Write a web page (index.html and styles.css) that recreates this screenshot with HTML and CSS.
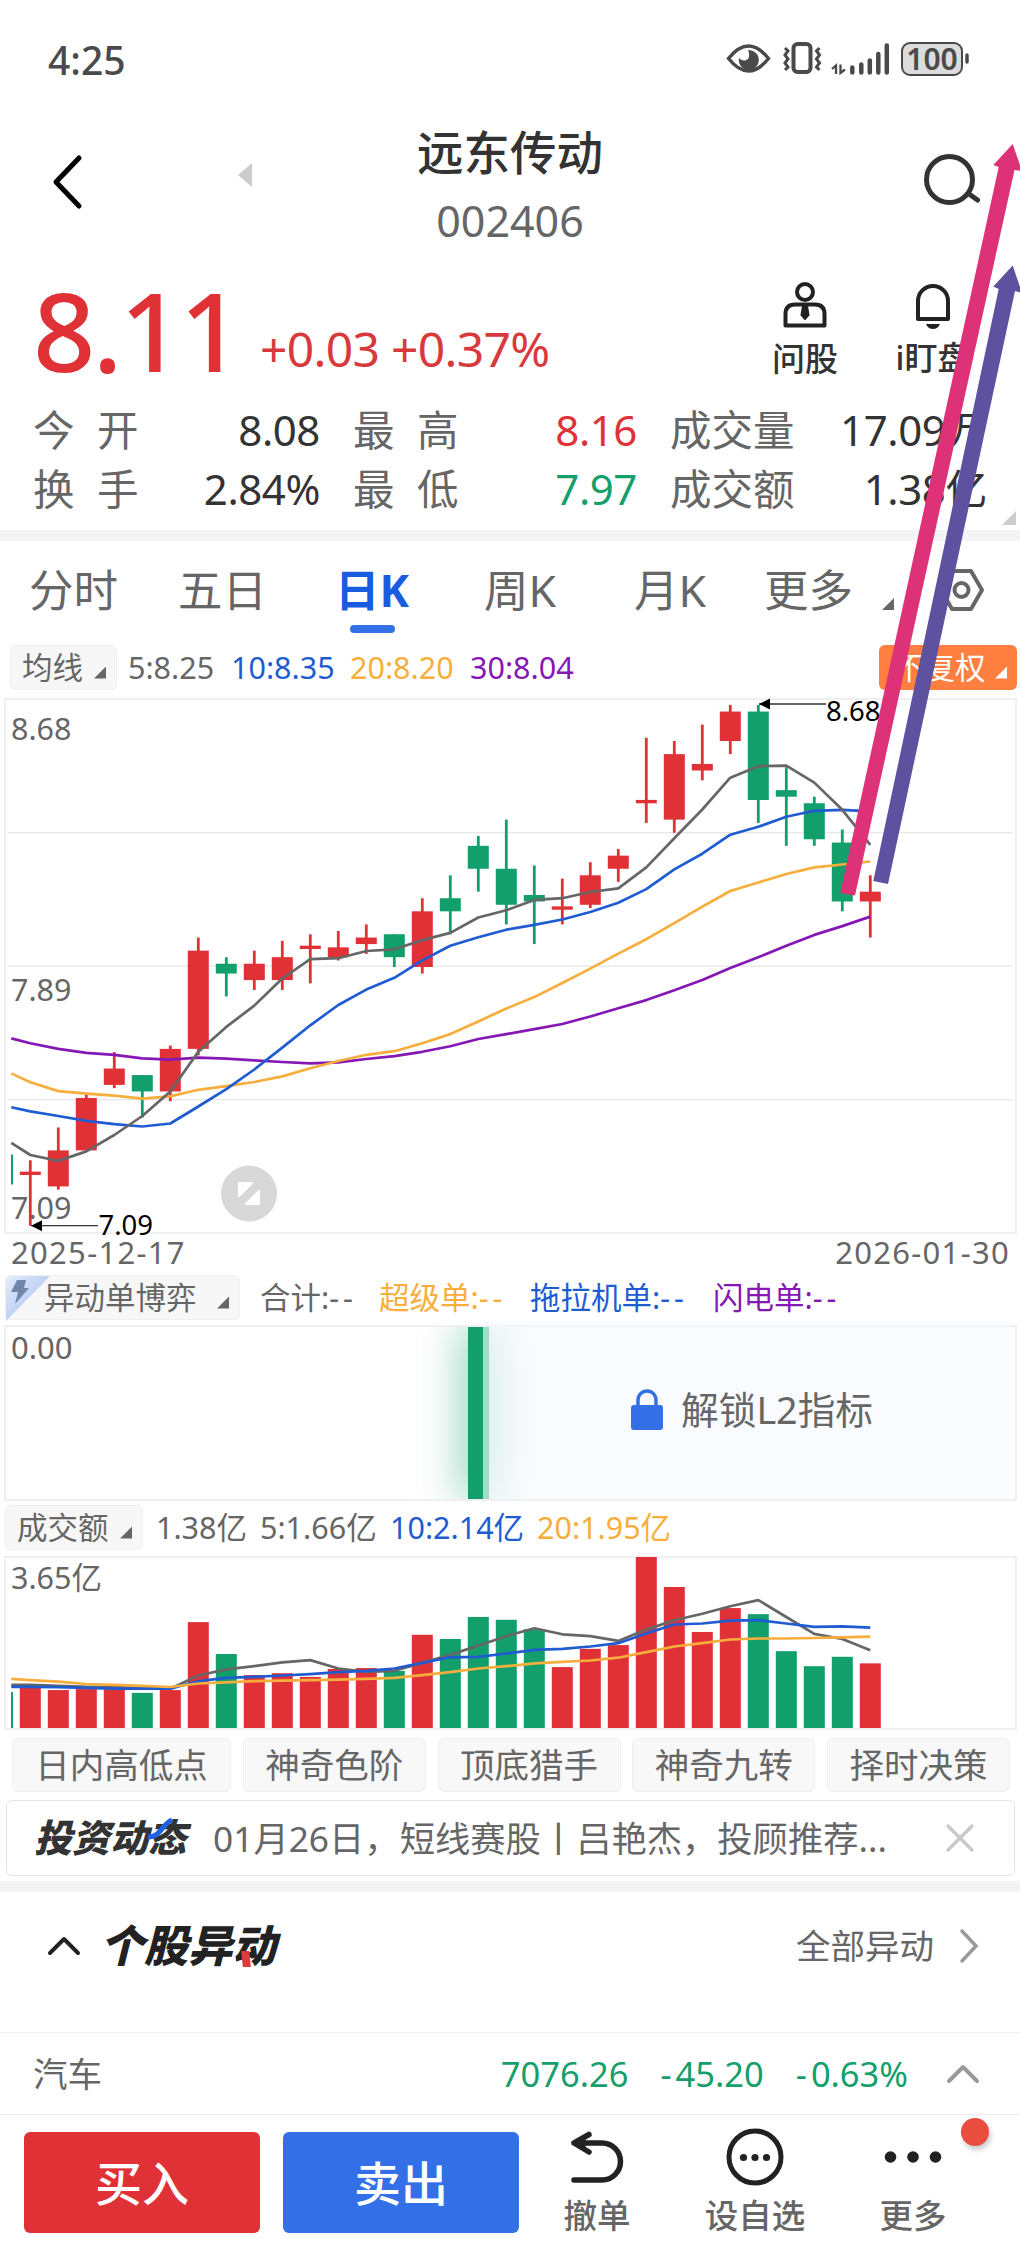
FILE: index.html
```html
<!DOCTYPE html>
<html lang="zh-CN">
  <head>
    <meta charset="UTF-8" />
    <meta name="viewport" content="width=device-width, initial-scale=1.0" />
    <title>远东传动 002406</title>
    <link rel="stylesheet" href="styles.css">
  </head>
  <body>
    <div class="status-bar">
      <span class="clock">4:25</span>
      <svg class="status-icons" width="250" height="44" viewBox="0 0 250 44">
        <g fill="none" stroke="#4a4a4a">
          <path d="M4 21C12 11 18 8.500 24 8.500S36 11 44 21C36 31 30 33.500 24 33.500S12 31 4 21Z" transform="translate(-.5 .5)" stroke-width="3.500" />
          <rect x="68.500" y="7" width="17" height="28" rx="4" stroke-width="4" />
          <path d="M60 11l3 3-3 4 3 4-3 4 3 4-3 3M94.500 11l-3 3 3 4-3 4 3 4-3 4 3 3" stroke-width="3" />
          <path d="M127 36V31M136 36V28M144.500 36V24M153 36V17.500M161.500 36V9" transform="translate(.3 -.5)" stroke-width="4.500" stroke-linecap="round" />
          <path d="M107 32l4-3.500V37M115.500 27.500V36l4.500-3.500" stroke-width="2.300" />
          <rect x="177" y="6" width="60" height="32" rx="8" fill="#dcdcdc" stroke-width="2" />
          <path d="M242 18v7" stroke-width="3.500" stroke-linecap="round" />
        </g>
        <path d="M23 13a10 10 0 1 1-9 8c3 4 10 3 10-2 0-3 0-4-1-6z" fill="#4a4a4a" />
        <text class="battery" x="207" y="32.500" text-anchor="middle">100</text>
      </svg>
    </div>

    <header class="header">
      <div class="header-left">
        <svg width="36" height="60" viewBox="0 0 36 60"><path d="M30 6L7 30l23 24" fill="none" stroke="#000" stroke-width="5" stroke-linecap="round" stroke-linejoin="round" /></svg>
        <svg width="14" height="24" viewBox="0 0 14 24"><path d="M14 0v24L0 12z" fill="#ccc" /></svg>
      </div>
      <div class="title">
        <h1>远东传动</h1>
        <p>002406</p>
      </div>
      <svg class="search" width="62" height="60" viewBox="0 0 62 60">
        <circle cx="29.500" cy="29.500" r="23" fill="none" stroke="#333" stroke-width="5" />
        <path d="M49 44l8.500 6" stroke="#333" stroke-width="5" stroke-linecap="round" />
      </svg>
    </header>

    <section class="quote">
      <span class="price">8.11</span>
      <span class="change">+0.03 +0.37%</span>
      <div class="quote-action">
        <svg width="46" height="48" viewBox="0 0 46 48" fill="none" stroke="#222" stroke-width="4">
          <circle cx="23" cy="11" r="8" />
          <path d="M3.500 44.500V33q0-9.500 9.500-9.500h20q9.500 0 9.500 9.500v11.500z" stroke-linejoin="round" />
          <path d="M21 25h4l1.500 9-3.500 4-3.500-4z" fill="#222" stroke-width="2" />
        </svg>
        <span>问股</span>
      </div>
      <div class="quote-action bell">
        <svg width="46" height="48" viewBox="0 0 46 48">
          <path d="M8 37V19a15 15 0 0 1 30 0v18z" fill="none" stroke="#222" stroke-width="4" stroke-linejoin="round" />
          <path d="M16 42h14q-2 5-7 5t-7-5z" fill="#222" />
        </svg>
        <span>i盯盘</span>
      </div>
    </section>

    <section class="stats">
      <div><span class="name wide">今开</span><b>8.08</b></div>
      <div><span class="name wide">最高</span><b class="up">8.16</b></div>
      <div><span class="name">成交量</span><b>17.09万</b></div>
      <div><span class="name wide">换手</span><b>2.84%</b></div>
      <div><span class="name wide">最低</span><b class="down">7.97</b></div>
      <div><span class="name">成交额</span><b>1.38亿</b></div>
      <i class="corner"></i>
    </section>

    <div class="band"></div>

    <nav class="tabs">
      <span>分时</span>
      <span>五日</span>
      <span class="active">日K</span>
      <span>周K</span>
      <span>月K</span>
      <span>更多</span>
      <i class="tri"></i>
      <svg class="gear" width="50" height="48" viewBox="0 0 50 48" fill="none" stroke="#666" stroke-width="4">
        <path d="M15 5h19l11 19-11 19H15L4 24z" stroke-linejoin="round" />
        <circle cx="24.500" cy="24" r="7" />
      </svg>
    </nav>

    <div class="legend ma">
      <span class="pill">均线<i class="tri"></i></span>
      <span class="c5">5:8.25</span>
      <span class="c10">10:8.35</span>
      <span class="c20">20:8.20</span>
      <span class="c30">30:8.04</span>
      <span class="pill adjust">不复权<i class="tri"></i></span>
    </div>

    <svg class="chart" id="kline" width="1020" height="536"></svg>

    <div class="dates"><span>2025-12-17</span><span>2026-01-30</span></div>

    <div class="legend l2">
      <span class="pill flash">
        <svg class="bolt" width="44" height="45" viewBox="0 0 44 45">
          <defs>
            <linearGradient id="fold" x1="0" y1="0" x2="1" y2="1">
              <stop offset="0" stop-color="#e4ebfb" />
              <stop offset=".55" stop-color="#bfd0f5" />
            </linearGradient>
          </defs>
          <path d="M6 0h38L0 45V6q0-6 6-6z" fill="url(#fold)" />
          <path d="M11 4h9l-2 8h5L9 28l3-12H5z" fill="#7285ad" />
        </svg>
        异动单博弈<i class="tri"></i>
      </span>
      <span>合计:<em>--</em></span>
      <span class="c20">超级单:<em>--</em></span>
      <span class="c10">拖拉机单:<em>--</em></span>
      <span class="c30">闪电单:<em>--</em></span>
    </div>

    <div class="l2-panel">
      <span class="zero">0.00</span>
      <div class="glow"></div>
      <div class="lock-cover">
        <svg width="32" height="42" viewBox="0 0 32 42">
          <path d="M7 18V11a9 9 0 0 1 18 0v7" fill="none" stroke="#3370e8" stroke-width="3.500" />
          <rect y="16" width="32" height="25" rx="3" fill="#3370e8" />
        </svg>
        <span>解锁L2指标</span>
      </div>
    </div>

    <div class="legend amount">
      <span class="pill">成交额<i class="tri"></i></span>
      <span>1.38亿</span>
      <span>5:1.66亿</span>
      <span class="c10">10:2.14亿</span>
      <span class="c20">20:1.95亿</span>
    </div>

    <svg class="chart" id="volume" width="1020" height="174"></svg>

    <div class="tags">
      <span>日内高低点</span>
      <span>神奇色阶</span>
      <span>顶底猎手</span>
      <span>神奇九转</span>
      <span>择时决策</span>
    </div>

    <div class="news">
      <strong class="news-logo">投资动态<svg width="28" height="22" viewBox="0 0 28 22"><path d="M1 19C14 19 15 6 25 2" fill="none" stroke="#1f62e6" stroke-width="5" /></svg></strong>
      <span class="news-text">01月26日，短线赛股丨吕艳杰，投顾推荐...</span>
      <svg width="30" height="30" viewBox="0 0 30 30"><path d="M3 3l24 24M27 3L3 27" stroke="#c8c8c8" stroke-width="3.500" stroke-linecap="round" /></svg>
    </div>

    <div class="band"></div>

    <section class="moves">
      <svg width="34" height="20" viewBox="0 0 34 20"><path d="M3 17L17 3l14 14" fill="none" stroke="#222" stroke-width="4" stroke-linecap="round" stroke-linejoin="round" /></svg>
      <strong class="moves-logo">个股异动<i></i></strong>
      <span class="all">全部异动</span>
      <svg width="20" height="36" viewBox="0 0 20 36"><path d="M3 3l14 15L3 33" fill="none" stroke="#999" stroke-width="3.500" stroke-linecap="round" /></svg>
    </section>

    <section class="sector">
      <span class="sector-name">汽车</span>
      <span class="down">7076.26</span>
      <span class="down"><em>-</em>45.20</span>
      <span class="down"><em>-</em>0.63%</span>
      <svg width="34" height="20" viewBox="0 0 34 20"><path d="M3 17L17 3l14 14" fill="none" stroke="#999" stroke-width="4" stroke-linecap="round" stroke-linejoin="round" /></svg>
    </section>

    <footer class="footer">
      <button class="buy">买入</button>
      <button class="sell">卖出</button>
      <div class="tool">
        <svg width="60" height="60" viewBox="0 0 60 60" fill="none" stroke="#222" stroke-width="5.500" stroke-linecap="round" stroke-linejoin="round">
          <path d="M7 16h28a18.500 18.500 0 0 1 0 37H7M22 7.500L7 16l15 9" />
          <path d="M9 16l8-4v8z" fill="#222" stroke-width="3" />
        </svg>
        <span>撤单</span>
      </div>
      <div class="tool watch">
        <svg width="60" height="60" viewBox="0 0 60 60">
          <circle cx="30" cy="30" r="26" fill="none" stroke="#222" stroke-width="5" />
          <g fill="#222"><circle cx="18.500" cy="30.500" r="3.600" /><circle cx="30" cy="30.500" r="3.600" /><circle cx="41.500" cy="30.500" r="3.600" /></g>
        </svg>
        <span>设自选</span>
      </div>
      <div class="tool more">
        <svg width="60" height="60" viewBox="0 0 60 60" fill="#222"><circle cx="7.500" cy="30" r="5.800" /><circle cx="30" cy="30" r="5.800" /><circle cx="52.500" cy="30" r="5.800" /></svg>
        <span>更多</span>
        <i class="dot"></i>
      </div>
    </footer>

    <!-- hand-drawn trend arrows over the page -->
    <svg class="arrows" width="1020" height="910" viewBox="0 0 1020 910">
      <path d="M840.300 893L998.700 167 993.300 165 1012.700 144 1022 171 1014.500 170 855 895.500z" fill="#dd3277" />
      <path d="M873.300 881L998.700 289 993.300 286.500 1012.700 265.500 1022 293 1015 291 888 884z" fill="#5e519f" />
    </svg>

    <script src="chart.js"></script>
  </body>
</html>
```
FILE: styles.css
```css
* {
  box-sizing: border-box;
}

body {
  width: 1020px;
  height: 2250px;
  margin: 0;
  position: relative;
  overflow: hidden;
  background-color: #fff;
  color: #666;
  font-family: "Noto Sans", "Noto Sans CJK SC", sans-serif;
  font-size: 31px;
  line-height: 1.2;
  white-space: nowrap;
}

svg {
  display: block;
  flex: none;
}

h1,
p {
  margin: 0;
}

em {
  font-style: normal;
}

.up {
  color: #e03236 !important;
}

.down {
  color: #159f6b !important;
}

/* status bar */
.status-bar {
  height: 120px;
  padding: 0 50px 0 48px;
  display: flex;
  align-items: center;
  justify-content: space-between;
}

.clock {
  font-size: 39px;
  font-weight: 500;
  color: #4a4a4a;
}

.status-icons {
  margin: -3px -5px 0 0;
}

.battery {
  font-size: 30px;
  font-weight: 600;
  fill: #4a4a4a;
}

/* header */
.header {
  height: 145px;
  display: grid;
  grid-template-columns: 1fr auto 1fr;
}

.header-left {
  display: flex;
  align-items: center;
  gap: 153px;
  padding: 0 0 22px 49px;
}

.header-left svg:last-child {
  margin-top: -13px;
}

.title {
  text-align: center;
}

.title h1 {
  margin-top: 2px;
  font-size: 46.5px;
  font-weight: 500;
  line-height: 60px;
  color: #333;
}

.title p {
  font-size: 43px;
  line-height: 60px;
  margin-top: 9px;
}

.search {
  justify-self: end;
  margin: 30px 38px 0 0;
}

/* price */
.quote {
  height: 130px;
  padding-left: 33px;
  display: flex;
  align-items: center;
}

.price {
  width: 227px;
  font-size: 109px;
  font-weight: 500;
  line-height: 130px;
  letter-spacing: -2.5px;
  color: #e03236;
}

.change {
  width: 477px;
  margin-top: 37px;
  font-size: 48px;
  letter-spacing: -0.7px;
  color: #d8393d;
}

.quote-action {
  width: 136px;
  display: flex;
  flex-direction: column;
  align-items: center;
  gap: 9px;
  font-size: 33px;
  font-weight: 500;
  line-height: 42px;
  color: #333;
}

.quote-action.bell {
  width: 120px;
  gap: 7px;
}

/* day figures */
.stats {
  position: relative;
  height: 135px;
  padding: 6px 33px 11px 33px;
  display: grid;
  grid-template-columns: 287px 284px 317px;
  grid-template-rows: 59px 59px;
  column-gap: 33px;
}

.stats div {
  display: flex;
  align-items: center;
  justify-content: space-between;
}

.stats b {
  font-size: 42px;
  font-weight: 400;
  letter-spacing: -0.4px;
  color: #333;
}

.stats .name {
  font-size: 41.5px;
}

.stats .wide {
  letter-spacing: 22.5px;
}

.corner {
  position: absolute;
  right: 4px;
  bottom: 5px;
  border: 7.5px solid transparent;
  border-right-color: #ccc;
  border-bottom-color: #ccc;
}

.band {
  height: 11px;
  background-color: #f4f4f4;
}

/* period tabs */
.tabs {
  height: 104px;
  padding-left: 29px;
  display: flex;
  font-size: 44.5px;
  line-height: 98px;
}

.tabs span {
  width: 149px;
}

.tabs span:nth-child(2) {
  width: 157px;
}

.tabs span:nth-child(4) {
  width: 150px;
}

.tabs span:nth-child(5) {
  width: 130px;
}

.tabs span:nth-child(6) {
  width: 118px;
}

.tabs .active {
  position: relative;
  color: #1a5ce0;
  font-weight: 700;
}

.tabs .active::after {
  content: "";
  position: absolute;
  left: 15px;
  bottom: 12px;
  width: 45px;
  height: 8px;
  border-radius: 4px;
  background-color: #3370e8;
}

.tri {
  flex: none;
  width: 12px;
  height: 12px;
  background-color: currentColor;
  clip-path: polygon(100% 0, 100% 100%, 0 100%);
}

.tabs .tri {
  margin: 57px 0 0 0;
}

.tabs .gear {
  margin: 25px 0 0 43px;
}

/* indicator rows */
.legend {
  height: 45px;
  display: flex;
  align-items: center;
  font-size: 30.5px;
}

.pill {
  height: 45px;
  display: flex;
  align-items: center;
  justify-content: space-between;
  padding: 0 10px 0 11px;
  border: 1px solid #efefef;
  border-radius: 6px;
  background-color: #f7f7f7;
}

.pill .tri {
  margin-top: 10px;
}

.ma {
  margin-bottom: 8px;
  padding: 0 3px 0 10px;
}

.ma .pill {
  width: 107px;
  margin-right: 11px;
}

.ma .c5 {
  width: 103px;
}

.ma .c10 {
  width: 119px;
}

.ma .c20 {
  width: 120px;
}

.ma .adjust {
  width: 138px;
  margin: 0 0 0 auto;
  padding-left: 15px;
  border: 0;
  background-color: #ff7f40;
  color: #fff;
}

.c10 {
  color: #1f5cd2;
}

.c20 {
  color: #f7ae3c;
}

.c30 {
  color: #8518b4;
}

.chart {
  overflow: visible;
}

.chart text {
  font-size: 30.5px;
  fill: #666;
}

.chart text.mark {
  font-size: 27.5px;
  fill: #000;
}

.dates {
  height: 41px;
  padding: 0 10px 3px 11px;
  display: flex;
  align-items: center;
  justify-content: space-between;
  letter-spacing: 1.3px;
  font-size: 31px;
}

.l2 {
  margin-bottom: 5px;
  padding-left: 5px;
}

.l2 em {
  letter-spacing: 4px;
}

.l2 .pill {
  position: relative;
  width: 235px;
  margin-right: 20px;
  padding-left: 38px;
}

.bolt {
  position: absolute;
  left: 0;
  top: 0;
}

.l2 > span:nth-child(2) {
  width: 119px;
}

.l2 > span:nth-child(3) {
  width: 151px;
}

.l2 > span:nth-child(4) {
  width: 183px;
}

.l2-panel {
  position: relative;
  height: 176px;
  margin: 0 3px 4px 4px;
  border: 2px solid #f0f0f2;
}

.zero {
  padding-left: 5px;
  line-height: 40px;
}

.glow {
  position: absolute;
  left: 462px;
  top: 0;
  width: 21px;
  height: 172px;
  background-color: #139f6b;
  box-shadow: 0 0 44px 2px rgba(19, 159, 107, 0.65);
  clip-path: inset(0 -60px);
}

.lock-cover {
  position: absolute;
  left: 477px;
  right: 5px;
  top: -6px;
  height: 178px;
  padding-left: 148px;
  display: flex;
  align-items: center;
  gap: 18px;
  font-size: 37.7px;
  color: #666;
  background-color: rgba(246, 249, 255, 0.5);
}

.lock-cover::before {
  content: "";
  position: absolute;
  left: 0;
  top: 6px;
  width: 527px;
  height: 172px;
  background-color: rgba(248, 250, 255, 0.3);
}

.lock-cover > * {
  position: relative;
}

.amount {
  margin-bottom: 6px;
  padding-left: 5px;
}

.amount .pill {
  width: 138px;
  margin-right: 13px;
}

.amount > span:nth-child(2) {
  width: 104px;
}

.amount > span:nth-child(3) {
  width: 130px;
}

.amount > span:nth-child(4) {
  width: 147px;
}

/* strategy tags */
.tags {
  margin: 8px 10px 8px 12px;
  height: 54px;
  display: grid;
  grid-template-columns: 219px repeat(4, 183px);
  justify-content: space-between;
}

.tags span {
  border: 1px solid #efefef;
  border-radius: 6px;
  background-color: #f8f8f8;
  text-align: center;
  font-size: 34.5px;
  line-height: 51px;
}

/* news card */
.news {
  height: 76px;
  margin: 0 5px 5px 6px;
  padding: 0 39px 0 27px;
  display: flex;
  align-items: center;
  border: 1.5px solid #e4e4e4;
  border-radius: 6px;
}

.news-logo {
  position: relative;
  width: 179px;
  font-size: 38px;
  font-weight: 900;
  font-style: italic;
  color: #333;
}

.news-logo svg {
  position: absolute;
  left: 113px;
  top: 3px;
}

.news-text {
  flex: 1;
  font-size: 35.3px;
}

/* unusual moves */
.moves {
  height: 140px;
  padding: 0 41px 33px 47px;
  display: flex;
  align-items: center;
}

.moves-logo {
  position: relative;
  margin-left: 19px;
  font-size: 44px;
  font-weight: 900;
  font-style: italic;
  color: #222;
}

.moves-logo i {
  position: absolute;
  right: 26px;
  bottom: 5px;
  width: 8px;
  height: 16px;
  background-color: #e03a3e;
  transform: skewX(6deg);
}

.all {
  margin: 0 25px 0 auto;
  font-size: 34.5px;
}

.sector {
  height: 82px;
  padding: 0 40px 0 33px;
  display: flex;
  align-items: center;
  gap: 32px;
  border-top: 1.5px solid #efefef;
  font-size: 34.5px;
}

.sector-name {
  margin-right: auto;
}

.sector em {
  letter-spacing: 4px;
}

.sector svg {
  margin-left: 6px;
}

/* bottom bar */
.footer {
  height: 136px;
  padding: 17px 0 0 24px;
  display: flex;
  border-top: 1.5px solid #efefef;
}

.footer button {
  width: 236px;
  height: 101px;
  margin: 0 23px 0 0;
  padding: 0 0 4px;
  border: 0;
  border-radius: 6px;
  font-family: inherit;
  font-size: 47px;
  font-weight: 500;
  color: #fff;
}

.footer .buy {
  background-color: #e03236;
}

.footer .sell {
  background-color: #3370e8;
}

.tool {
  position: relative;
  width: 110px;
  margin-top: -5px;
  display: flex;
  flex-direction: column;
  align-items: center;
  gap: 7px;
  font-size: 33.5px;
  font-weight: 500;
  line-height: 42px;
}

.watch {
  margin-left: 48px;
}

.more {
  margin-left: 48px;
}

.dot {
  position: absolute;
  left: 103px;
  top: -9px;
  width: 28px;
  height: 28px;
  border-radius: 50%;
  background-color: #e84d3f;
  box-shadow: 2px 4px 5px rgba(0, 0, 0, 0.2);
}

.arrows {
  position: absolute;
  left: 0;
  top: 0;
}
```
FILE: chart.js
```javascript
const RED = "#e03236";
const GREEN = "#139f6b";
const STEP = 28;
const FIRST = 30.3;

// [high, body top, body bottom, low, up]
const candles = [
  [7.29, 7.25, 7.25, 7.09, 1], [7.39, 7.32, 7.21, 7.20, 1], [7.49, 7.48, 7.32, 7.32, 1],
  [7.62, 7.57, 7.52, 7.51, 1], [7.55, 7.55, 7.50, 7.42, 0], [7.64, 7.63, 7.50, 7.47, 1],
  [7.97, 7.93, 7.63, 7.61, 1], [7.91, 7.89, 7.86, 7.79, 0], [7.93, 7.89, 7.84, 7.81, 1],
  [7.96, 7.91, 7.84, 7.81, 1], [7.98, 7.94, 7.94, 7.83, 1], [7.99, 7.94, 7.91, 7.90, 1],
  [8.01, 7.97, 7.95, 7.92, 1], [7.98, 7.98, 7.91, 7.88, 0], [8.09, 8.05, 7.88, 7.86, 1],
  [8.16, 8.09, 8.05, 7.98, 0], [8.28, 8.25, 8.18, 8.11, 0], [8.33, 8.18, 8.07, 8.01, 0],
  [8.19, 8.10, 8.08, 7.95, 0], [8.15, 8.06, 8.06, 8.01, 1], [8.20, 8.16, 8.07, 8.06, 1],
  [8.24, 8.22, 8.18, 8.14, 1], [8.58, 8.385, 8.385, 8.32, 1], [8.57, 8.53, 8.33, 8.29, 1],
  [8.62, 8.50, 8.48, 8.45, 1], [8.68, 8.66, 8.57, 8.53, 1], [8.68, 8.66, 8.39, 8.32, 0],
  [8.49, 8.42, 8.40, 8.25, 0], [8.40, 8.38, 8.27, 8.25, 0], [8.30, 8.26, 8.08, 8.05, 0],
  [8.16, 8.11, 8.08, 7.97, 1],
];

// first value of each average is the left edge of the plot
const priceAverages = {
  "#8518b4": [7.662, 7.647, 7.63, 7.618, 7.612, 7.601, 7.597, 7.603, 7.6, 7.595, 7.59, 7.586, 7.589, 7.599, 7.608, 7.621, 7.638, 7.66, 7.675, 7.69, 7.706, 7.729, 7.754, 7.779, 7.809, 7.84, 7.877, 7.91, 7.945, 7.978, 8.005, 8.034],
  "#f7ae3c": [7.555, 7.528, 7.501, 7.493, 7.487, 7.478, 7.485, 7.505, 7.516, 7.529, 7.546, 7.571, 7.593, 7.612, 7.623, 7.647, 7.675, 7.714, 7.753, 7.788, 7.831, 7.875, 7.921, 7.965, 8.014, 8.064, 8.112, 8.138, 8.164, 8.184, 8.193, 8.202],
  "#1f5cd2": [7.452, 7.439, 7.425, 7.41, 7.4, 7.393, 7.402, 7.454, 7.507, 7.567, 7.634, 7.702, 7.764, 7.811, 7.847, 7.9, 7.945, 7.971, 7.994, 8.009, 8.025, 8.048, 8.076, 8.118, 8.178, 8.226, 8.284, 8.308, 8.339, 8.357, 8.36, 8.355],
  "#666": [7.343, 7.306, 7.288, 7.317, 7.367, 7.425, 7.5, 7.621, 7.697, 7.762, 7.845, 7.904, 7.907, 7.929, 7.934, 7.962, 7.984, 8.031, 8.053, 8.085, 8.09, 8.109, 8.12, 8.184, 8.273, 8.361, 8.458, 8.493, 8.495, 8.443, 8.36, 8.253],
};

const amounts = [0.87, 0.81, 0.83, 0.83, 0.75, 0.81, 2.26, 1.58, 1.13, 1.17, 1.09, 1.26, 1.28, 1.22, 1.99, 1.9, 2.37, 2.31, 2.11, 1.3, 1.69, 1.77, 3.65, 3.01, 2.05, 2.56, 2.43, 1.64, 1.32, 1.52, 1.38];

const amountAverages = {
  "#666": [0.92, 0.92, 0.9, 0.88, 0.87, 0.85, 0.84, 1.12, 1.25, 1.32, 1.4, 1.45, 1.27, 1.2, 1.22, 1.39, 1.56, 1.76, 1.96, 2.13, 2, 1.96, 1.86, 2.1, 2.3, 2.44, 2.6, 2.73, 2.37, 2.01, 1.9, 1.66],
  "#1f5cd2": [0.88, 0.88, 0.87, 0.855, 0.84, 0.84, 0.84, 1, 1.07, 1.09, 1.12, 1.15, 1.19, 1.22, 1.27, 1.39, 1.51, 1.52, 1.59, 1.67, 1.69, 1.74, 1.81, 2.02, 2.21, 2.23, 2.29, 2.3, 2.23, 2.16, 2.17, 2.14],
  "#f7ae3c": [1.05, 1.02, 0.99, 0.94, 0.92, 0.9, 0.875, 0.95, 0.975, 1, 1.01, 1.02, 1.03, 1.05, 1.07, 1.13, 1.19, 1.27, 1.32, 1.38, 1.41, 1.44, 1.5, 1.62, 1.74, 1.81, 1.89, 1.91, 1.91, 1.92, 1.935, 1.95],
};

const priceY = (p) => 7 + (8.68 - p) * 327.5;
const amountY = (a) => 172 - (a / 3.65) * 171;

function rect(x, y, w, h, fill) {
  return `<rect x="${x}" y="${y}" width="${w}" height="${h}" fill="${fill}"/>`;
}

function frame(height) {
  return `<rect x="5" y="1" width="1011" height="${height - 2}" fill="none" stroke="#f0f0f2" stroke-width="2"/>`;
}

function averages(lines, toY) {
  return Object.entries(lines)
    .map(([color, values]) => {
      const points = values.map(
        (v, i) => `${i === 0 ? 11.3 : FIRST + (i - 1) * STEP},${toY(v).toFixed(1)}`
      );
      return `<polyline points="${points.join(" ")}" fill="none" stroke="${color}" stroke-width="2.7" stroke-linejoin="round"/>`;
    })
    .join("");
}

function drawKline() {
  let html = frame(536);
  [134, 267.5, 401].forEach((y) => {
    html += rect(8, y, 1005, 1.3, "#e8e8ea");
  });
  html += '<text x="11" y="42">8.68</text><text x="11" y="303">7.89</text><text x="11" y="521">7.09</text>';
  html += rect(11, 456.5, 2, 30, GREEN);
  candles.forEach(([high, top, bottom, low, up], i) => {
    const x = FIRST + i * STEP;
    const color = up ? RED : GREEN;
    const y = priceY(top);
    const h = priceY(bottom) - y;
    html += rect(x - 1.4, priceY(high), 2.8, priceY(low) - priceY(high), color);
    html += rect(x - 10.5, h ? y : y - 1.7, 21, h || 3.4, color);
  });
  html += averages(priceAverages, priceY);

  // highest and lowest marks
  html += '<path d="M759 6h67M31 527.700h67" stroke="#333" stroke-width="1.300"/>';
  html += '<path d="M759 6l11-5.500v11zM31 527.700l11-5.500v11z"/>';
  html += '<text class="mark" x="826" y="22.500">8.68</text><text class="mark" x="98.500" y="536.500">7.09</text>';

  // full screen button
  html += '<circle cx="249" cy="495.500" r="28" fill="#d8d8d8"/>';
  html += '<path d="M239 485h13l-13 13zM259 493v13h-13z" fill="#fff" stroke="#fff" stroke-width="2" stroke-linejoin="round"/>';
  document.getElementById("kline").innerHTML = html;
}

function drawVolume() {
  let html = frame(174);
  html += rect(11, 136, 2, 36, GREEN);
  amounts.forEach((a, i) => {
    const y = amountY(a);
    html += rect(FIRST + i * STEP - 10.5, y, 21, 172 - y, candles[i][4] ? RED : GREEN);
  });
  html += averages(amountAverages, amountY);
  html += '<text x="11" y="33">3.65亿</text>';
  document.getElementById("volume").innerHTML = html;
}

drawKline();
drawVolume();
```
